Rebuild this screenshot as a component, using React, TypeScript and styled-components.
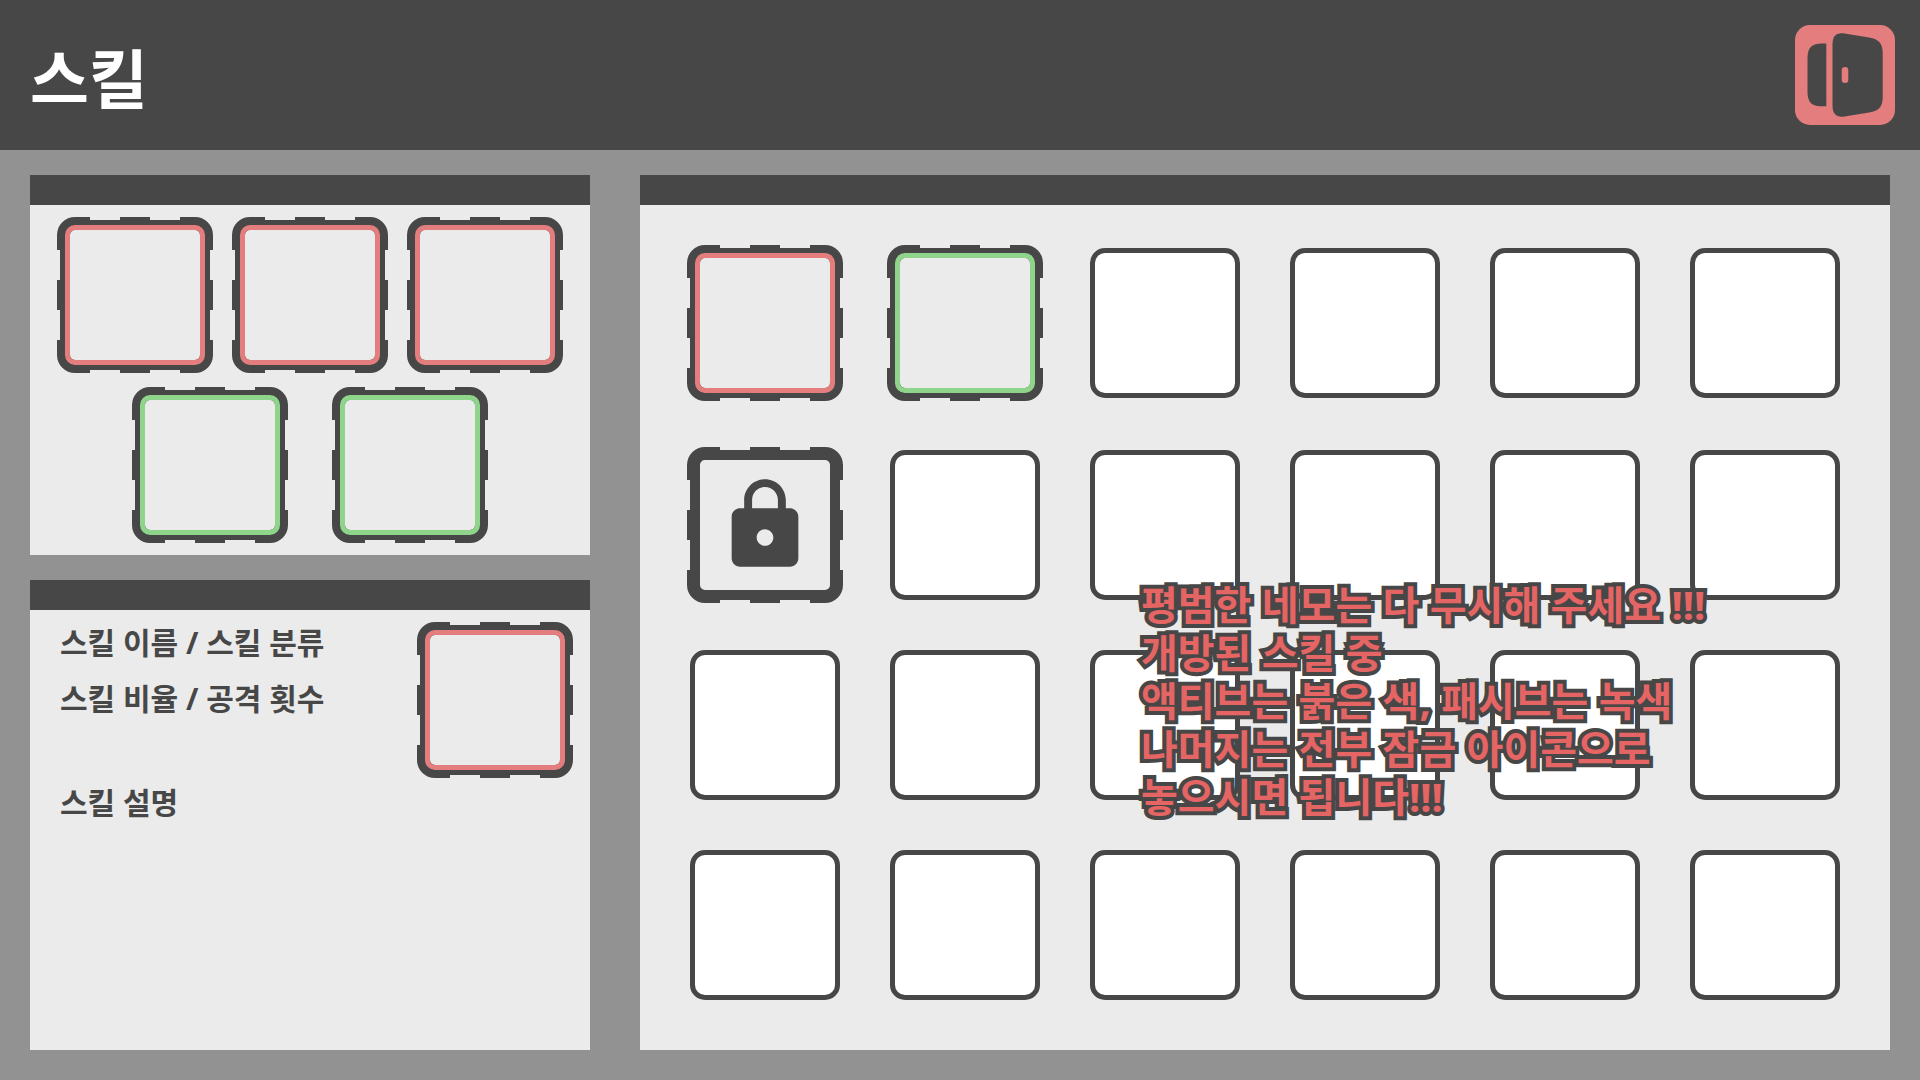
import React from "react";
import styled, { createGlobalStyle } from "styled-components";

const color = {
  ink: "#474747",
  page: "#929292",
  panel: "#ebebeb",
  white: "#ffffff",
  active: "#e47e7e",
  passive: "#8ed48a",
  note: "#e56464",
};

const GlobalStyle = createGlobalStyle`
  *, *::before, *::after { box-sizing: border-box; }
  body {
    margin: 0;
    background: ${color.page};
    color: ${color.ink};
    font-family: "Noto Sans", "Noto Sans CJK KR", sans-serif;
    font-weight: 700;
  }
`;

const Page = styled.div`
  display: flex;
  flex-direction: column;
  min-height: 100vh;
`;

const Header = styled.header`
  display: flex;
  align-items: center;
  justify-content: space-between;
  height: 150px;
  padding: 0 25px 0 30px;
  background: ${color.ink};
`;

const Title = styled.h1`
  margin: 0;
  padding-top: 8px;
  font-size: 64px;
  line-height: 88px;
  color: ${color.white};
`;

const ExitButton = styled.button`
  display: block;
  width: 100px;
  height: 100px;
  padding: 0;
  border: 0;
  border-radius: 15px;
  background: ${color.active};
  cursor: pointer;
`;

const Main = styled.main`
  flex: 1;
  display: flex;
  gap: 50px;
  padding: 25px 30px 30px;
`;

const Sidebar = styled.div`
  display: flex;
  flex-direction: column;
  gap: 25px;
  width: 560px;
  flex-shrink: 0;
`;

const Panel = styled.section<{ $grow?: boolean }>`
  flex: ${(p) => (p.$grow ? "1" : "none")};
  border-top: 30px solid ${color.ink};
  background: ${color.panel};
`;

const Loadout = styled.div`
  display: flex;
  flex-direction: column;
  gap: 20px;
  padding: 15px 30px;
`;

const LoadoutRow = styled.div<{ $gap: number }>`
  display: flex;
  justify-content: center;
  gap: ${(p) => p.$gap}px;
`;

const Detail = styled.div`
  display: flex;
  justify-content: space-between;
  align-items: flex-start;
  padding: 15px 20px 15px 30px;
`;

const DetailText = styled.div`
  display: flex;
  flex-direction: column;
  font-size: 30px;
  line-height: 36px;
`;

const DetailLine = styled.p`
  margin: 0 0 20px;
`;

const Description = styled.p`
  margin: 48px 0 0;
`;

const SkillBoard = styled.div`
  position: relative;
  padding: 43px 50px 50px;
`;

const SkillGrid = styled.div`
  display: grid;
  grid-template-columns: repeat(6, 150px);
  grid-template-rows: 152px repeat(3, 150px);
  justify-content: space-between;
  row-gap: 50px;
`;

const EmptySlot = styled.button`
  width: 150px;
  height: 150px;
  padding: 0;
  border: 5px solid ${color.ink};
  border-radius: 15px;
  background: ${color.white};
  cursor: pointer;
`;

const FramedSlot = styled.button`
  display: block;
  width: 150px;
  height: 150px;
  padding: 0;
  border: 0;
  background: none;
  cursor: pointer;

  svg {
    display: block;
    overflow: visible;
  }
`;

const Note = styled.p`
  position: absolute;
  top: 376px;
  left: 501px;
  margin: 0;
  font-size: 40px;
  line-height: 48px;
  white-space: nowrap;
  color: ${color.note};
  -webkit-text-stroke: 8px ${color.ink};
  paint-order: stroke fill;
  pointer-events: none;
`;

type SlotKind = "active" | "passive" | "locked" | "empty";

const slotLabel: Record<SlotKind, string> = {
  active: "액티브 스킬",
  passive: "패시브 스킬",
  locked: "잠긴 스킬",
  empty: "빈 칸",
};

/* Rounded plate whose rim stands 3px proud, with two 30px notches on each side. */
const PLATE =
  "M15 -3H30V0H60V-3H90V0H120V-3H135A18 18 0 0 1 153 15V30H150V60H153V90H150V120H153V135" +
  "A18 18 0 0 1 135 153H120V150H90V153H60V150H30V153H15A18 18 0 0 1 -3 135V120H0V90H-3V60H0V30H-3V15" +
  "A18 18 0 0 1 15 -3Z" +
  "M15 10A5 5 0 0 0 10 15V135A5 5 0 0 0 15 140H135A5 5 0 0 0 140 135V15A5 5 0 0 0 135 10Z";

const LOCK =
  "M18 8h-1V6c0-2.76-2.24-5-5-5S7 3.24 7 6v2H6c-1.1 0-2 .9-2 2v10c0 1.1.9 2 2 2h12c1.1 0 2-.9 2-2V10" +
  "c0-1.1-.9-2-2-2zm-6 9c-1.1 0-2-.9-2-2s.9-2 2-2 2 .9 2 2-.9 2-2 2zm3.1-9H8.9V6c0-1.71 1.39-3.1 3.1-3.1" +
  "s3.1 1.39 3.1 3.1v2z";

function Slot({ kind }: { kind: SlotKind }) {
  if (kind === "empty") return <EmptySlot type="button" aria-label={slotLabel.empty} />;
  return (
    <FramedSlot type="button" aria-label={slotLabel[kind]}>
      <svg width="150" height="150" viewBox="0 0 150 150" aria-hidden="true">
        <path d={PLATE} fill={color.ink} fillRule="evenodd" />
        {kind === "locked" ? (
          <path d={LOCK} fill={color.ink} transform="translate(25 25) scale(4.1667)" />
        ) : (
          <rect
            x="7.5"
            y="7.5"
            width="135"
            height="135"
            rx="7.5"
            fill="none"
            stroke={color[kind]}
            strokeWidth="5"
          />
        )}
      </svg>
    </FramedSlot>
  );
}

function DoorIcon() {
  return (
    <svg width="100" height="100" viewBox="0 0 100 100" aria-hidden="true">
      <path
        d="M31.3 18.5V81.3C25 81.3 20 81.2 17 79C13.5 76.4 12.5 72 12.5 66V34C12.5 28 13.5 23.5 17 20.9C20 18.7 25 18.5 31.3 18.5Z"
        fill={color.ink}
      />
      <path
        d="M37.5 20C37.5 11 41 7.3 49.5 8.5L74 12.4C84 14 87.7 18.5 87.7 28V72C87.7 81.5 84 86 74 87.6L49.5 91.5C41 92.7 37.5 89 37.5 80Z"
        fill={color.ink}
      />
      <rect x="46.7" y="42" width="6.6" height="16" rx="3.3" fill={color.active} />
    </svg>
  );
}

const board: SlotKind[] = Array.from({ length: 24 }, (_, i) =>
  i === 0 ? "active" : i === 1 ? "passive" : i === 6 ? "locked" : "empty",
);

export default function App() {
  return (
    <Page>
      <GlobalStyle />
      <Header>
        <Title>스킬</Title>
        <ExitButton type="button" aria-label="나가기">
          <DoorIcon />
        </ExitButton>
      </Header>
      <Main>
        <Sidebar>
          <Panel>
            <Loadout>
              <LoadoutRow $gap={25}>
                <Slot kind="active" />
                <Slot kind="active" />
                <Slot kind="active" />
              </LoadoutRow>
              <LoadoutRow $gap={50}>
                <Slot kind="passive" />
                <Slot kind="passive" />
              </LoadoutRow>
            </Loadout>
          </Panel>
          <Panel $grow>
            <Detail>
              <DetailText>
                <DetailLine>스킬 이름 / 스킬 분류</DetailLine>
                <DetailLine>스킬 비율 / 공격 횟수</DetailLine>
                <Description>스킬 설명</Description>
              </DetailText>
              <Slot kind="active" />
            </Detail>
          </Panel>
        </Sidebar>
        <Panel $grow>
          <SkillBoard>
            <SkillGrid>
              {board.map((kind, i) => (
                <Slot key={i} kind={kind} />
              ))}
            </SkillGrid>
            <Note>
              평범한 네모는 다 무시해 주세요 !!!
              <br />
              개방된 스킬 중
              <br />
              액티브는 붉은 색, 패시브는 녹색
              <br />
              나머지는 전부 잠금 아이콘으로
              <br />
              놓으시면 됩니다!!!
            </Note>
          </SkillBoard>
        </Panel>
      </Main>
    </Page>
  );
}
